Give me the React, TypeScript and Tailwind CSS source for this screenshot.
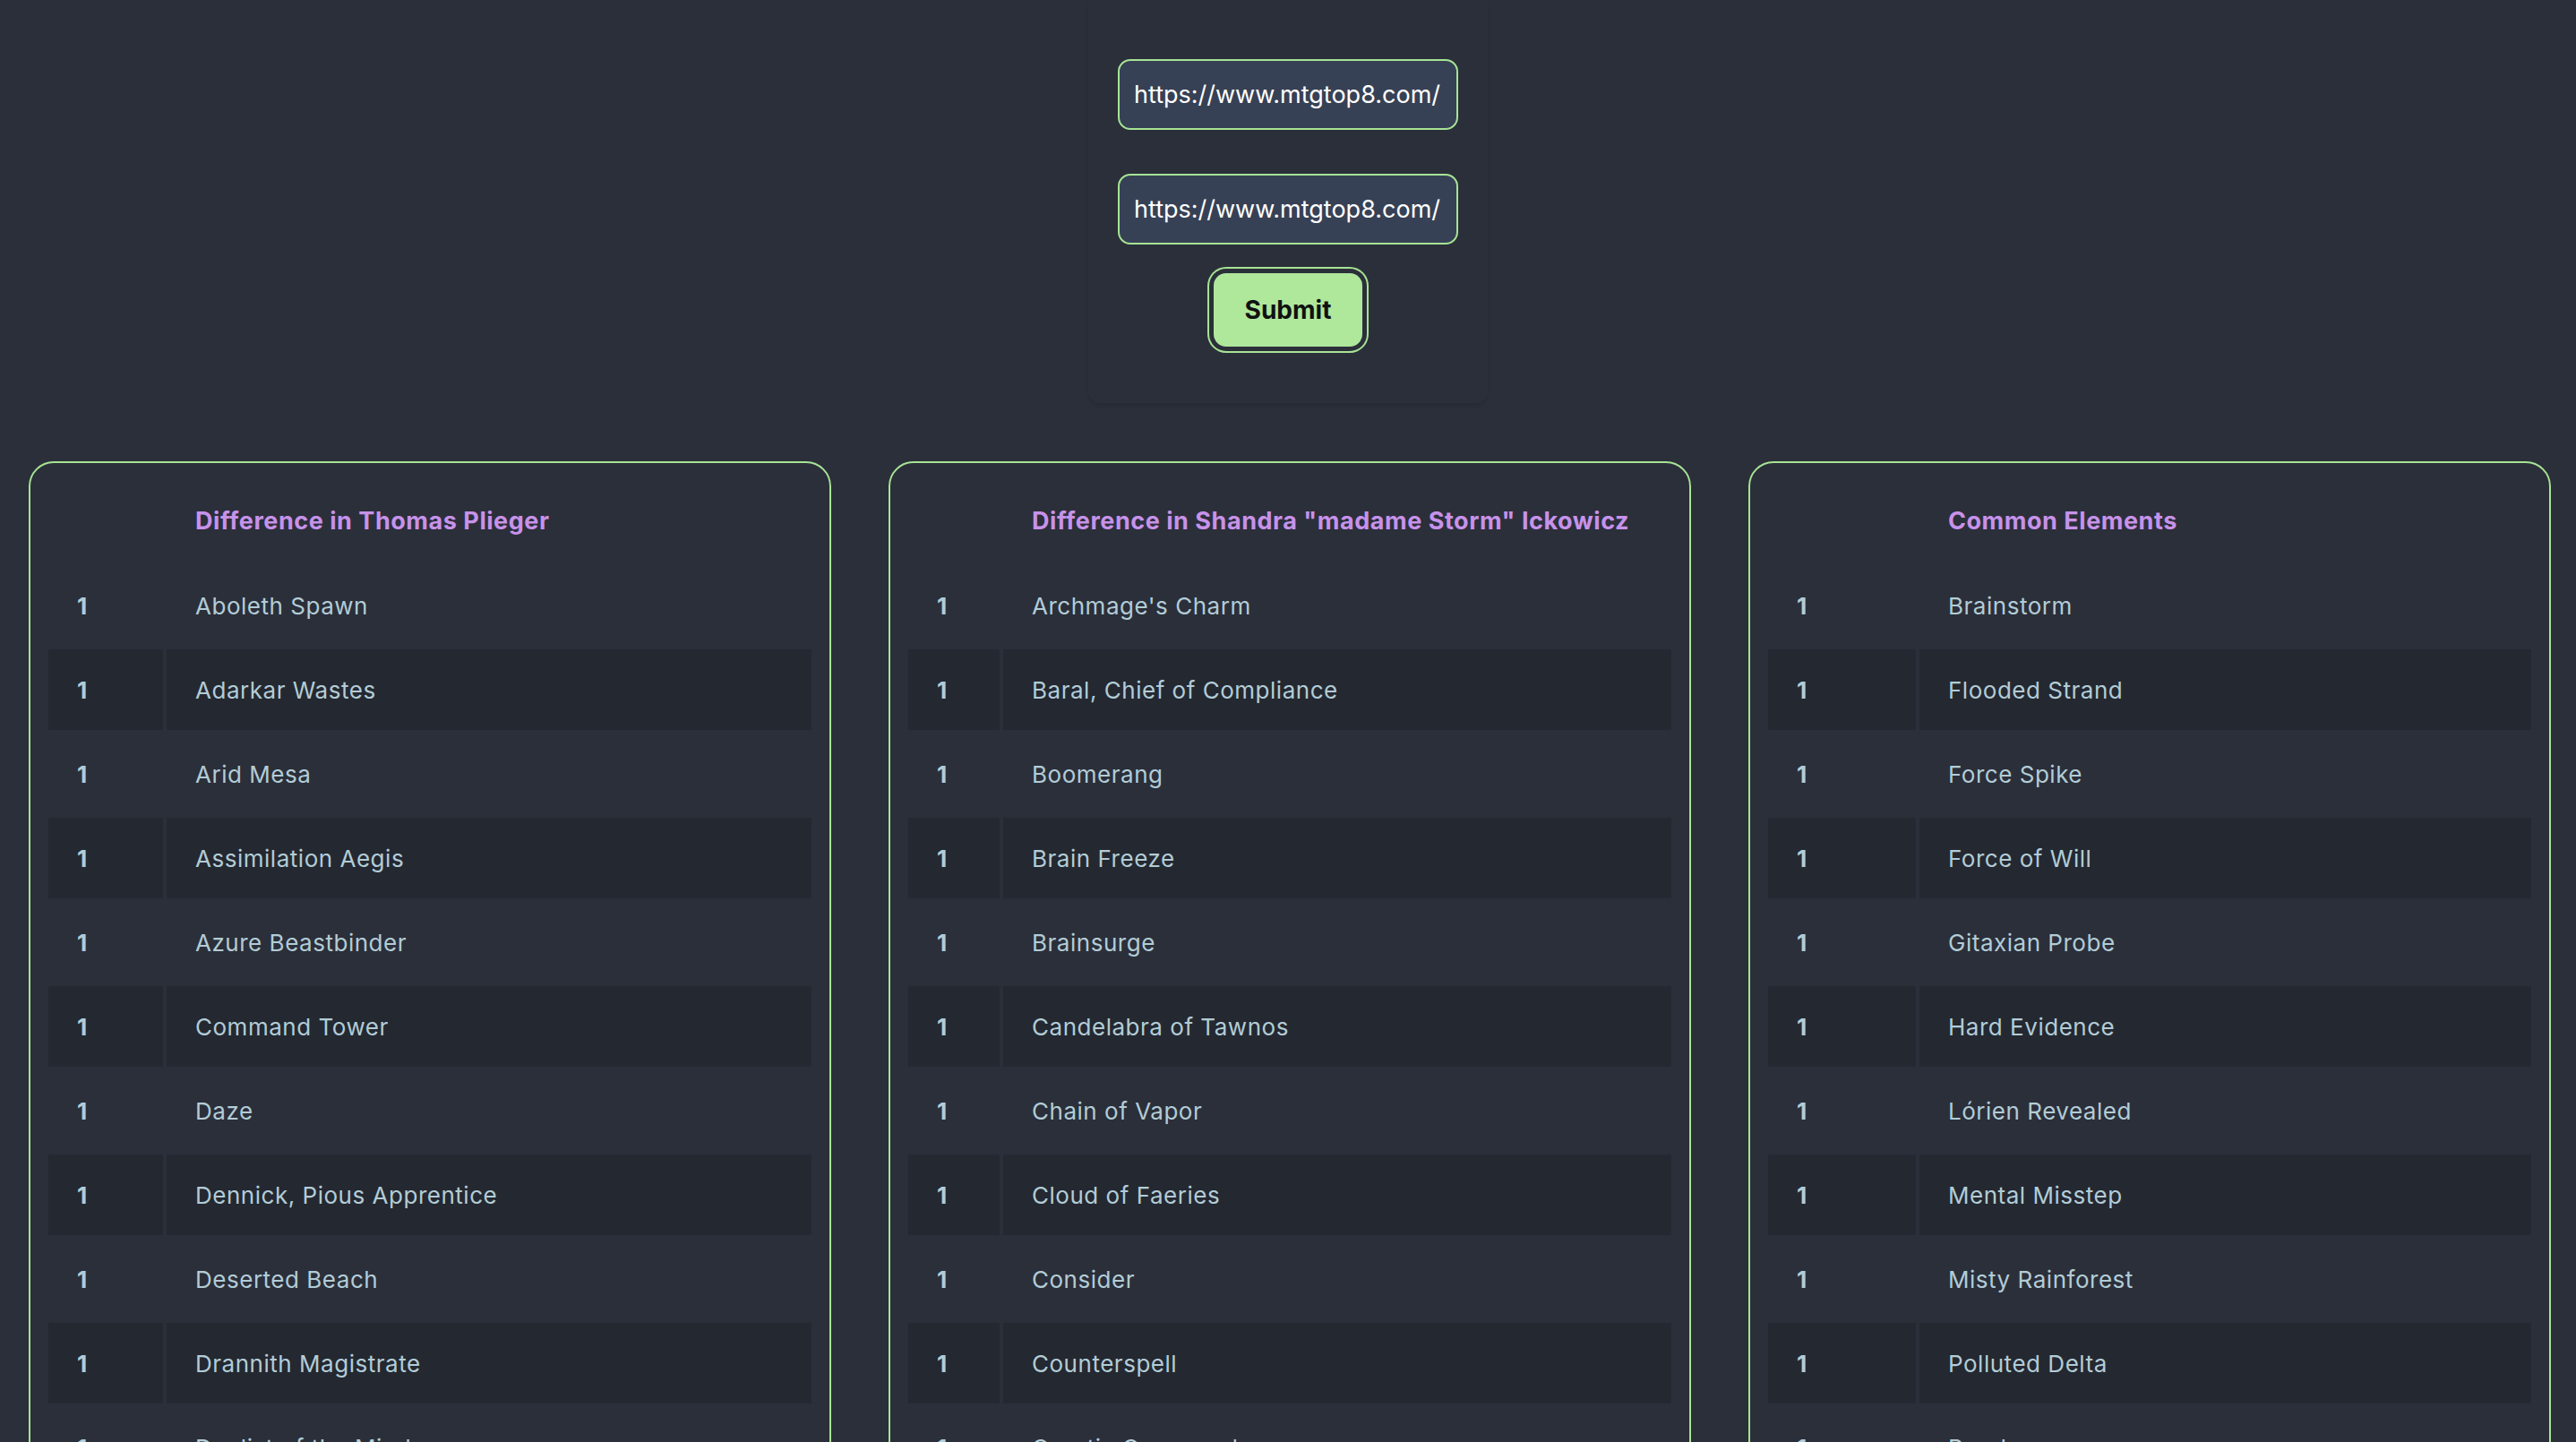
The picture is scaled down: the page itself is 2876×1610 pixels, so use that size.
import { useState } from 'react';

const tables = [
  {
    title: 'Difference in Thomas Plieger',
    firstCol: 'w-[128px]',
    cards: [
      'Aboleth Spawn',
      'Adarkar Wastes',
      'Arid Mesa',
      'Assimilation Aegis',
      'Azure Beastbinder',
      'Command Tower',
      'Daze',
      'Dennick, Pious Apprentice',
      'Deserted Beach',
      'Drannith Magistrate',
      'Duelist of the Mind',
      'Emry, Lurker of the Loch',
    ],
  },
  {
    title: 'Difference in Shandra "madame Storm" Ickowicz',
    firstCol: 'w-[102px]',
    cards: [
      "Archmage's Charm",
      'Baral, Chief of Compliance',
      'Boomerang',
      'Brain Freeze',
      'Brainsurge',
      'Candelabra of Tawnos',
      'Chain of Vapor',
      'Cloud of Faeries',
      'Consider',
      'Counterspell',
      'Cryptic Command',
      'Dark Ritual',
    ],
  },
  {
    title: 'Common Elements',
    firstCol: 'w-[165px]',
    cards: [
      'Brainstorm',
      'Flooded Strand',
      'Force Spike',
      'Force of Will',
      'Gitaxian Probe',
      'Hard Evidence',
      'Lórien Revealed',
      'Mental Misstep',
      'Misty Rainforest',
      'Polluted Delta',
      'Ponder',
      'Preordain',
    ],
  },
];

const DeckTable = ({ title, firstCol, cards }: { title: string; firstCol: string; cards: string[] }) => (
  <div className="rounded-[28px] border-2 border-[#a7e394] p-4">
    <table className="w-full border-separate border-spacing-[4px] text-left">
      <thead>
        <tr>
          <th className={`${firstCol} h-[90px]`}></th>
          <th className="h-[90px] px-8 text-[27px] font-bold tracking-[0.02em] text-[#c792ea]">{title}</th>
        </tr>
      </thead>
      <tbody>
        {cards.map((name, i) => {
          // every second row gets the darker stripe
          const stripe = i % 2 === 1 ? 'bg-[#242831]' : '';
          return (
            <tr key={name}>
              <td className={`${stripe} h-[90px] px-8 text-[26px] font-bold text-[#b2ccd6]`}>1</td>
              <td className={`${stripe} h-[90px] px-8 text-[26px] tracking-[0.02em] text-[#b2ccd6]`}>{name}</td>
            </tr>
          );
        })}
      </tbody>
    </table>
  </div>
);

export default function App() {
  const [first, setFirst] = useState('https://www.mtgtop8.com/');
  const [second, setSecond] = useState('https://www.mtgtop8.com/');

  return (
    <div className="min-h-screen bg-[#2b2f3a] font-['Inter','Liberation_Sans',sans-serif]">
      {/* Form */}
      <div className="mx-auto flex w-[446px] flex-col items-center rounded-b-[14px] pt-[66px] pb-[63px] shadow-[0_3px_5px_rgba(0,0,0,0.1)]">
        <input
          value={first}
          onChange={(e) => setFirst(e.target.value)}
          className="h-[79px] w-[380px] rounded-[14px] border-2 border-[#a7e394] bg-[#374155] px-4 text-[27px] text-white outline-none"
        />
        <input
          value={second}
          onChange={(e) => setSecond(e.target.value)}
          className="mt-[49px] h-[79px] w-[380px] rounded-[14px] border-2 border-[#a7e394] bg-[#374155] px-4 text-[27px] text-white outline-none"
        />
        <button className="mt-[32px] h-[82px] w-[166px] rounded-[14px] bg-[#afe79b] text-[28px] font-bold text-[#111] ring-2 ring-[#a7e394] ring-offset-[5px] ring-offset-[#2b2f3a]">
          Submit
        </button>
      </div>

      {/* Tables */}
      <div className="mt-[65px] grid grid-cols-3 gap-16 pl-8 pr-7">
        {tables.map((t) => (
          <DeckTable key={t.title} {...t} />
        ))}
      </div>
    </div>
  );
}
